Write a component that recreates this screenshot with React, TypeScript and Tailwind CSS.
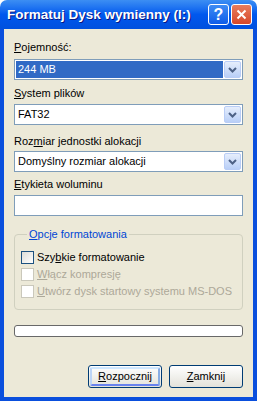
import React from 'react';

const font = { fontFamily: '"Liberation Sans", Arial, sans-serif' };

const Arrow = () => (
  <svg width="9" height="6" viewBox="0 0 9 6">
    <path d="M1 1 L4.5 4.5 L8 1" fill="none" stroke="#4D6185" strokeWidth="2" />
  </svg>
);

const ComboBox = ({ value, selected }: { value: string; selected?: boolean }) => (
  <div className="h-[21px] border border-[#7F9DB9] bg-white flex items-center p-[1px]">
    <div className={`flex-1 h-full flex items-center pl-[2px] text-[11px] leading-[13px] ${selected ? 'bg-[#316AC5] text-white' : 'text-black'}`}>
      {value}
    </div>
    <div className="w-[17px] h-[17px] ml-[1px] rounded-[2px] border border-[#B9CDF6] bg-gradient-to-b from-[#E6EEFC] to-[#B9CFF7] flex items-center justify-center">
      <Arrow />
    </div>
  </div>
);

const Check = ({ label, disabled }: { label: React.ReactNode; disabled?: boolean }) => (
  <div className="flex items-center h-[13px]">
    <div
      className={`w-[13px] h-[13px] border ${disabled ? 'border-[#CAC8BB] bg-white' : 'border-[#1C5180] bg-gradient-to-br from-[#DCDCD7] to-white'}`}
    />
    <span className={`ml-[3px] text-[11px] leading-[13px] ${disabled ? 'text-[#ACA899]' : 'text-black'}`}>{label}</span>
  </div>
);

export default function App() {
  return (
    <div className="w-[257px] h-[401px] flex flex-col select-none" style={font}>
      {/* title bar */}
      <div className="h-[29px] shrink-0 rounded-t-[7px] bg-gradient-to-b from-[#3C8EF3] via-[#0058EE] to-[#0050DE] flex items-center pl-[7px] pr-[5px]">
        <span className="text-white font-bold text-[13.5px] [text-shadow:1px_1px_0_#0A1883] flex-1 pt-[1px]">
          Formatuj Dysk wymienny (I:)
        </span>
        <div className="w-[21px] h-[21px] rounded-[3px] border border-white bg-gradient-to-b from-[#3F8CF3] to-[#0D5BE9] flex items-center justify-center text-white font-bold text-[16px] leading-none">
          ?
        </div>
        <div className="w-[21px] h-[21px] ml-[2px] rounded-[3px] border border-white bg-gradient-to-b from-[#E87C5D] to-[#D6472A] flex items-center justify-center">
          <svg width="11" height="11" viewBox="0 0 11 11">
            <path d="M1.5 1.5 L9.5 9.5 M9.5 1.5 L1.5 9.5" stroke="white" strokeWidth="2" />
          </svg>
        </div>
      </div>

      {/* client */}
      <div className="flex-1 flex flex-col bg-[#0A4FDD] px-[4px] pb-[4px]">
        <div className="flex-1 bg-[#ECE9D8] px-[10px] flex flex-col text-[11px] leading-[13px] text-black">
          <div className="mt-[12px] h-[13px]"><u>P</u>ojemność:</div>
          <div className="mt-[5px]"><ComboBox value="244 MB" selected /></div>

          <div className="mt-[7px] h-[13px]"><u>S</u>ystem plików</div>
          <div className="mt-[4px]"><ComboBox value="FAT32" /></div>

          <div className="mt-[10px] h-[13px]">Roz<u>m</u>iar jednostki alokacji</div>
          <div className="mt-[3px]"><ComboBox value="Domyślny rozmiar alokacji" /></div>

          <div className="mt-[6px] h-[13px]"><u>E</u>tykieta woluminu</div>
          <div className="mt-[4px] h-[21px] border border-[#7F9DB9] bg-white" />

          <fieldset className="mt-[12px] border border-[#D0D0BF] rounded-[4px] pl-[6px] pb-[11px]">
            <legend className="ml-[6px] px-[2px] text-[#0046D5] leading-[13px]"><u>O</u>pcje formatowania</legend>
            <div className="mt-[10px] flex flex-col gap-[4px]">
              <Check label={<>Szy<u>b</u>kie formatowanie</>} />
              <Check label={<><u>W</u>łącz kompresję</>} disabled />
              <Check label={<><u>U</u>twórz dysk startowy systemu MS-DOS</>} disabled />
            </div>
          </fieldset>

          <div className="mt-[15px] h-[12px] border border-[#686868] rounded-[3px] bg-white" />

          <div className="mt-[28px] flex justify-end gap-[7px]">
            <div className="w-[74px] h-[23px] rounded-[3px] border border-[#003C74] bg-gradient-to-b from-white to-[#E3E2DA] p-[1px]">
              <div className="w-full h-full rounded-[2px] border-2 border-t-[#CEE7FF] border-l-[#BCD4F6] border-r-[#89ADE4] border-b-[#6982EE] flex items-center justify-center">
                <u>R</u>ozpocznij
              </div>
            </div>
            <div className="w-[74px] h-[23px] rounded-[3px] border border-[#003C74] bg-gradient-to-b from-white to-[#E3E2DA] flex items-center justify-center">
              <u>Z</u>amknij
            </div>
          </div>
        </div>
      </div>
    </div>
  );
}
